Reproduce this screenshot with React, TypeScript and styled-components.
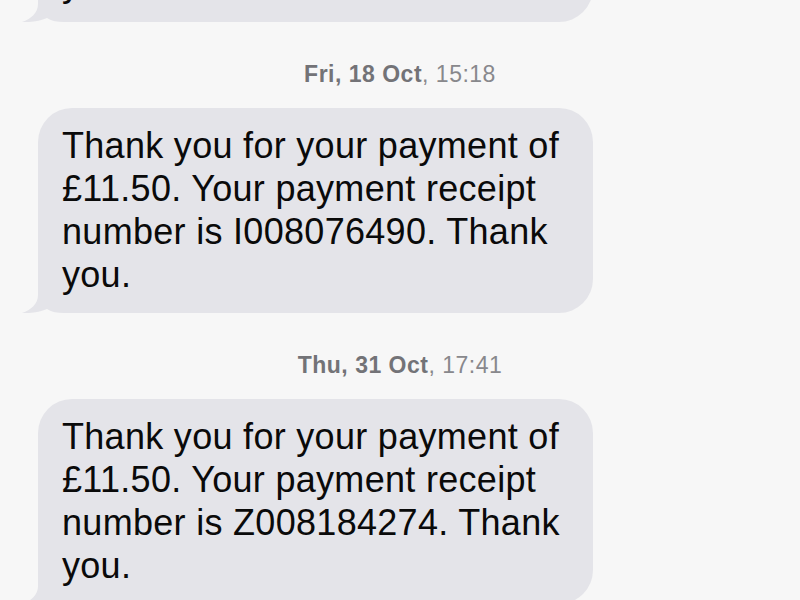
import styled, { createGlobalStyle } from "styled-components";

const GlobalStyle = createGlobalStyle`
  html, body {
    margin: 0;
    padding: 0;
    background: #f7f7f7;
  }
`;

interface Message {
  id: string;
  date?: { day: string; time: string };
  text: string;
}

const messages: Message[] = [
  {
    id: "m1",
    text: "Thank you for your payment of £11.50. Your payment receipt number is Y008061732. Thank you.",
  },
  {
    id: "m2",
    date: { day: "Fri, 18 Oct", time: "15:18" },
    text: "Thank you for your payment of £11.50. Your payment receipt number is I008076490. Thank you.",
  },
  {
    id: "m3",
    date: { day: "Thu, 31 Oct", time: "17:41" },
    text: "Thank you for your payment of £11.50. Your payment receipt number is Z008184274. Thank you.",
  },
];

function Tail() {
  return (
    <TailSvg viewBox="0 0 50 34" width="50" height="34">
      <path
        d="M16 0 L16 16 C16 25 9 31 0 34 C9 34.5 18 33 25 30 C30 33 35 34 42 34 L50 34 L50 0 Z"
        fill="#e4e4e9"
      />
    </TailSvg>
  );
}

export default function App() {
  return (
    <>
      <GlobalStyle />
      <Screen>
        <Thread>
          {messages.map((m) => (
            <Entry key={m.id}>
              {m.date && (
                <Stamp>
                  <b>{m.date.day}</b>, {m.date.time}
                </Stamp>
              )}
              <Bubble>
                <Tail />
                <BubbleText>{m.text}</BubbleText>
              </Bubble>
            </Entry>
          ))}
        </Thread>
      </Screen>
    </>
  );
}

const Screen = styled.div`
  width: 800px;
  height: 600px;
  overflow: hidden;
  background: #f7f7f7;
`;

const Thread = styled.div`
  display: flex;
  flex-direction: column;
  margin-top: -183px;
  padding-left: 38px;
`;

const Entry = styled.div`
  display: flex;
  flex-direction: column;
`;

const Stamp = styled.div`
  width: 724px;
  padding: 40px 0 22px;
  text-align: center;
  font-family: "Liberation Sans", Arial, sans-serif;
  font-size: 23px;
  letter-spacing: 0.5px;
  line-height: 24px;
  color: #88888c;

  b {
    font-weight: 700;
    color: #737377;
  }
`;

const Bubble = styled.div`
  position: relative;
  box-sizing: border-box;
  width: 555px;
  padding: 16px 24px 17px;
  background: #e4e4e9;
  border-radius: 34px;
`;

const BubbleText = styled.span`
  position: relative;
  z-index: 1;
  font-family: "Liberation Sans", Arial, sans-serif;
  font-size: 36px;
  letter-spacing: 0.3px;
  line-height: 43px;
  color: #0a0a0a;
`;

const TailSvg = styled.svg`
  position: absolute;
  left: -16px;
  bottom: 0;
  display: block;
  z-index: 0;
`;
